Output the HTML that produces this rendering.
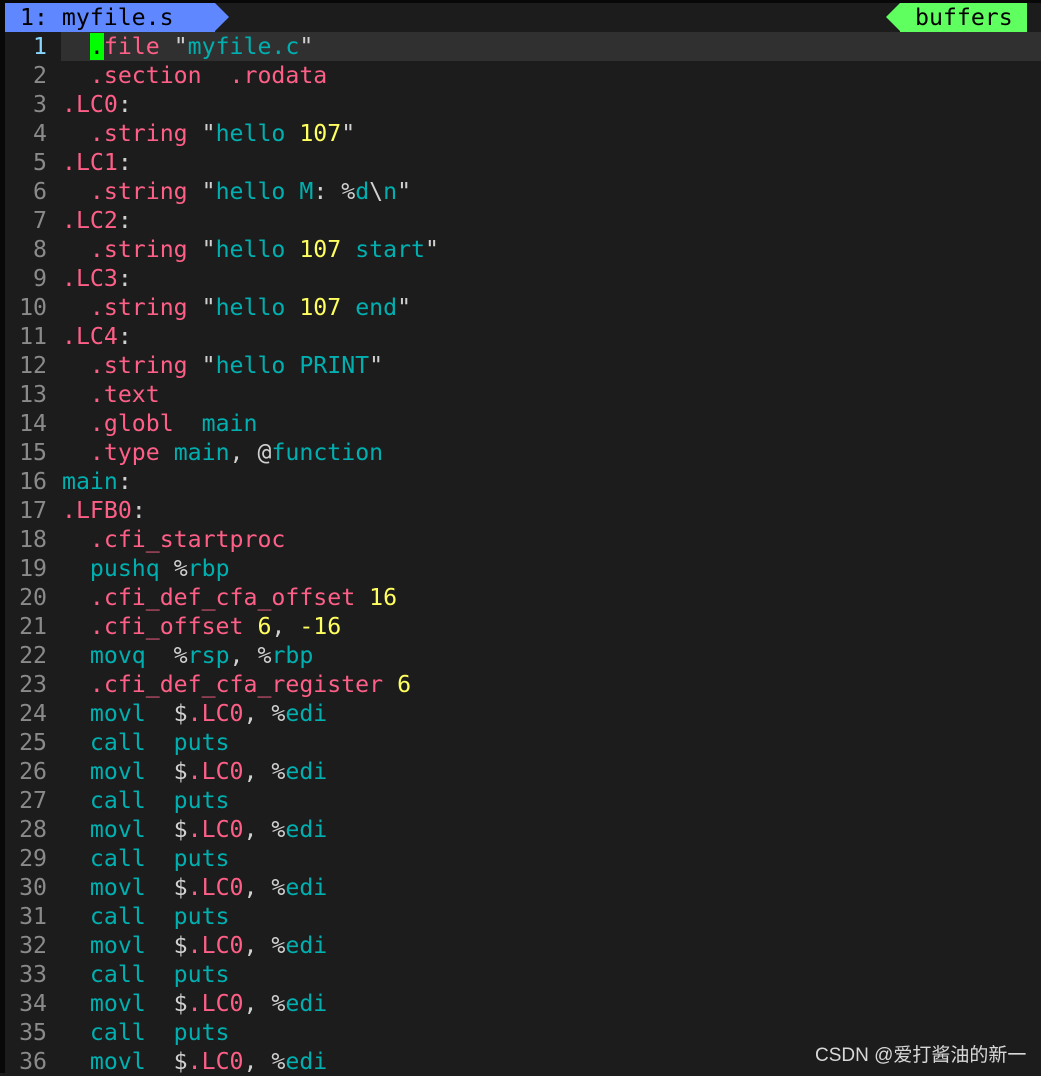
<!DOCTYPE html>
<html><head><meta charset="utf-8"><style>
html,body{margin:0;padding:0}
body{width:1041px;height:1073px;background:#1c1c1c;position:relative;overflow:hidden;font-family:"DejaVu Sans Mono","Liberation Mono",monospace;font-size:23.2px}
.strip{position:absolute;left:0;top:0;width:5px;height:1073px;background:#080808}
.top{position:absolute;left:0;top:0;width:1041px;height:3px;background:#080808}
.tab{position:absolute;left:5px;top:3px;width:210px;height:29px;background:#5f87ff;color:#000;line-height:29px;padding-left:15px;box-sizing:border-box}
.tabarr{position:absolute;left:215px;top:3px;width:0;height:0;border-top:14.5px solid transparent;border-bottom:14.5px solid transparent;border-left:14px solid #5f87ff}
.buf{position:absolute;left:900px;top:3px;width:127px;height:29px;background:#5fff5f;color:#000;line-height:29px;padding-left:15px;box-sizing:border-box}
.bufarr{position:absolute;left:886px;top:3px;width:0;height:0;border-top:14.5px solid transparent;border-bottom:14.5px solid transparent;border-right:14px solid #5fff5f}
.cl{position:absolute;left:61px;top:32px;width:980px;height:29px;background:#303030}
.l{position:absolute;left:0;height:29px;line-height:29px;white-space:pre;color:#d0d0d0}
.n{display:inline-block;width:47px;text-align:right;color:#8a8a8a;margin-right:15px}
.r{color:#ff5f87}.t{color:#00afaf}.y{color:#ffff5f}
.cur{background:#00ff00;color:#000}
.wm{position:absolute;left:815px;top:1040px;font-family:"Liberation Sans","Noto Sans CJK SC",sans-serif;font-size:19px;color:#d8d8d8}
</style></head><body>
<div class="strip"></div><div class="top"></div>
<div class="tab">1: myfile.s</div><div class="tabarr"></div>
<div class="bufarr"></div><div class="buf">buffers</div>
<div class="cl"></div>
<div class="l" style="top:32px"><span class="n" style="color:#87d7ff">1</span>  <span class="cur">.</span><span class="r">file</span> "<span class="t">myfile.c</span>"</div>
<div class="l" style="top:61px"><span class="n">2</span>  <span class="r">.section  .rodata</span></div>
<div class="l" style="top:90px"><span class="n">3</span><span class="r">.LC0</span>:</div>
<div class="l" style="top:119px"><span class="n">4</span>  <span class="r">.string</span> "<span class="t">hello </span><span class="y">107</span>"</div>
<div class="l" style="top:148px"><span class="n">5</span><span class="r">.LC1</span>:</div>
<div class="l" style="top:177px"><span class="n">6</span>  <span class="r">.string</span> "<span class="t">hello M</span>: %<span class="t">d</span>\<span class="t">n</span>"</div>
<div class="l" style="top:206px"><span class="n">7</span><span class="r">.LC2</span>:</div>
<div class="l" style="top:235px"><span class="n">8</span>  <span class="r">.string</span> "<span class="t">hello </span><span class="y">107</span><span class="t"> start</span>"</div>
<div class="l" style="top:264px"><span class="n">9</span><span class="r">.LC3</span>:</div>
<div class="l" style="top:293px"><span class="n">10</span>  <span class="r">.string</span> "<span class="t">hello </span><span class="y">107</span><span class="t"> end</span>"</div>
<div class="l" style="top:322px"><span class="n">11</span><span class="r">.LC4</span>:</div>
<div class="l" style="top:351px"><span class="n">12</span>  <span class="r">.string</span> "<span class="t">hello PRINT</span>"</div>
<div class="l" style="top:380px"><span class="n">13</span>  <span class="r">.text</span></div>
<div class="l" style="top:409px"><span class="n">14</span>  <span class="r">.globl</span>  <span class="t">main</span></div>
<div class="l" style="top:438px"><span class="n">15</span>  <span class="r">.type</span> <span class="t">main</span>, @<span class="t">function</span></div>
<div class="l" style="top:467px"><span class="n">16</span><span class="t">main</span>:</div>
<div class="l" style="top:496px"><span class="n">17</span><span class="r">.LFB0</span>:</div>
<div class="l" style="top:525px"><span class="n">18</span>  <span class="r">.cfi_startproc</span></div>
<div class="l" style="top:554px"><span class="n">19</span>  <span class="t">pushq</span> %<span class="t">rbp</span></div>
<div class="l" style="top:583px"><span class="n">20</span>  <span class="r">.cfi_def_cfa_offset</span> <span class="y">16</span></div>
<div class="l" style="top:612px"><span class="n">21</span>  <span class="r">.cfi_offset</span> <span class="y">6</span>, <span class="y">-16</span></div>
<div class="l" style="top:641px"><span class="n">22</span>  <span class="t">movq</span>  %<span class="t">rsp</span>, %<span class="t">rbp</span></div>
<div class="l" style="top:670px"><span class="n">23</span>  <span class="r">.cfi_def_cfa_register</span> <span class="y">6</span></div>
<div class="l" style="top:699px"><span class="n">24</span>  <span class="t">movl</span>  $<span class="r">.LC0</span>, %<span class="t">edi</span></div>
<div class="l" style="top:728px"><span class="n">25</span>  <span class="t">call  puts</span></div>
<div class="l" style="top:757px"><span class="n">26</span>  <span class="t">movl</span>  $<span class="r">.LC0</span>, %<span class="t">edi</span></div>
<div class="l" style="top:786px"><span class="n">27</span>  <span class="t">call  puts</span></div>
<div class="l" style="top:815px"><span class="n">28</span>  <span class="t">movl</span>  $<span class="r">.LC0</span>, %<span class="t">edi</span></div>
<div class="l" style="top:844px"><span class="n">29</span>  <span class="t">call  puts</span></div>
<div class="l" style="top:873px"><span class="n">30</span>  <span class="t">movl</span>  $<span class="r">.LC0</span>, %<span class="t">edi</span></div>
<div class="l" style="top:902px"><span class="n">31</span>  <span class="t">call  puts</span></div>
<div class="l" style="top:931px"><span class="n">32</span>  <span class="t">movl</span>  $<span class="r">.LC0</span>, %<span class="t">edi</span></div>
<div class="l" style="top:960px"><span class="n">33</span>  <span class="t">call  puts</span></div>
<div class="l" style="top:989px"><span class="n">34</span>  <span class="t">movl</span>  $<span class="r">.LC0</span>, %<span class="t">edi</span></div>
<div class="l" style="top:1018px"><span class="n">35</span>  <span class="t">call  puts</span></div>
<div class="l" style="top:1047px"><span class="n">36</span>  <span class="t">movl</span>  $<span class="r">.LC0</span>, %<span class="t">edi</span></div>
<div class="wm">CSDN @爱打酱油的新一</div>
</body></html>
